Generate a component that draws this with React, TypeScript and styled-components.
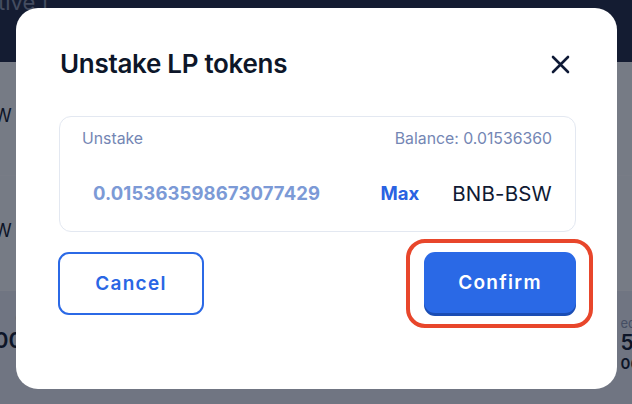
import React from "react";
import styled, { createGlobalStyle } from "styled-components";

const Global = createGlobalStyle`
  html, body { margin: 0; padding: 0; }
  body {
    width: 632px;
    height: 404px;
    overflow: hidden;
    font-family: Inter, "Noto Sans", "Liberation Sans", sans-serif;
    background: #ffffff;
  }
  * { box-sizing: border-box; }
`;

const Page = styled.div`
  width: 632px;
  height: 404px;
  display: flex;
  flex-direction: column;
  overflow: hidden;
  background: #f6f7fa;
`;

const Header = styled.header`
  height: 62px;
  flex: none;
  background: #1d2640;
  color: #8a93a8;
  font-size: 22px;
  line-height: 22px;
  overflow: hidden;
`;

const HeaderText = styled.div`
  margin-top: -9px;
  margin-left: -2px;
`;

const Row = styled.div<{ $h: number; $shade?: boolean }>`
  height: ${(p) => p.$h}px;
  flex: none;
  display: flex;
  justify-content: space-between;
  align-items: flex-start;
  background: ${(p) => (p.$shade ? "#eceff5" : "#fbfcfd")};
  border-top: 1px solid #ffffff;
  color: #0d1629;
`;

const EdgeText = styled.div<{ $top: number; $size?: number; $weight?: number; $lh?: number }>`
  margin-top: ${(p) => p.$top}px;
  font-size: ${(p) => p.$size ?? 18}px;
  font-weight: ${(p) => p.$weight ?? 400};
  line-height: ${(p) => p.$lh ?? 22}px;
`;

const EdgeCol = styled.div<{ $right?: boolean }>`
  display: flex;
  flex-direction: column;
  align-items: ${(p) => (p.$right ? "flex-start" : "flex-end")};
  margin-left: ${(p) => (p.$right ? "0" : "-6px")};
  margin-right: ${(p) => (p.$right ? "-8px" : "0")};
`;

const Small = styled.span`
  font-size: 13px;
  color: #8b96b0;
`;

const Overlay = styled.div`
  position: fixed;
  inset: 0;
  background: rgba(14, 21, 40, 0.56);
  display: flex;
  align-items: flex-start;
  justify-content: flex-start;
  padding: 8px 0 0 16px;
`;

const Modal = styled.div`
  width: 601px;
  height: 381px;
  background: #ffffff;
  border-radius: 22px;
  padding: 41px 41px 0 43px;
  display: flex;
  flex-direction: column;
`;

const TitleRow = styled.div`
  display: flex;
  align-items: center;
  justify-content: space-between;
  height: 30px;
`;

const Title = styled.h2`
  margin: 0;
  font-size: 26px;
  line-height: 30px;
  font-weight: 600;
  color: #0d1629;
  letter-spacing: -0.3px;
  padding-left: 1px;
`;

const CloseButton = styled.button`
  border: none;
  background: none;
  padding: 0;
  margin-right: 6px;
  width: 20px;
  height: 20px;
  display: flex;
  align-items: center;
  justify-content: center;
  cursor: pointer;
  color: #0f1a36;
`;

const InputBox = styled.div`
  margin-top: 37px;
  height: 116px;
  border: 1.5px solid #e3e8f1;
  border-radius: 12px;
  padding: 12px 23px 0 22px;
  display: flex;
  flex-direction: column;
`;

const LabelRow = styled.div`
  display: flex;
  justify-content: space-between;
  align-items: center;
  font-size: 15.8px;
  line-height: 20px;
  color: #7486b4;
`;

const ValueRow = styled.div`
  margin-top: 28px;
  display: flex;
  align-items: center;
  height: 32px;
`;

const Amount = styled.div`
  flex: 1;
  padding-left: 11px;
  font-size: 18.5px;
  font-weight: 700;
  color: #7c9ad6;
  letter-spacing: 0.1px;
`;

const MaxButton = styled.button`
  border: none;
  background: none;
  padding: 0;
  font-family: inherit;
  font-size: 18.5px;
  font-weight: 700;
  color: #2a62e2;
  margin-right: 33px;
  cursor: pointer;
`;

const Token = styled.div`
  font-size: 20.5px;
  color: #101a33;
  letter-spacing: 0.2px;
`;

const ButtonRow = styled.div`
  margin-top: 7px;
  display: flex;
  align-items: center;
  justify-content: space-between;
  margin-left: -1px;
  margin-right: -17px;
`;

const BaseButton = styled.button`
  font-family: inherit;
  font-size: 19px;
  font-weight: 600;
  letter-spacing: 1.3px;
  border-radius: 11px;
  cursor: pointer;
`;

const CancelButton = styled(BaseButton)`
  width: 146px;
  height: 63px;
  background: #ffffff;
  border: 2px solid #2b69e6;
  color: #2a66e4;
`;

const Highlight = styled.div`
  border: 4px solid #e8462b;
  border-radius: 19px;
  padding: 9px 13px 8px 14px;
  display: flex;
`;

const ConfirmButton = styled(BaseButton)`
  width: 152px;
  height: 61px;
  background: #2a69e6;
  border: none;
  color: #ffffff;
  box-shadow: 0 3px 0 #1b4db4;
  margin-bottom: 3px;
`;

const CloseIcon = () => (
  <svg width="19" height="19" viewBox="0 0 19 19" fill="none">
    <path d="M2 2L17 17M17 2L2 17" stroke="currentColor" strokeWidth="2.6" strokeLinecap="round" />
  </svg>
);

export default function App() {
  return (
    <>
      <Global />
      <Page>
        <Header>
          <HeaderText>tive f</HeaderText>
        </Header>
        <Row $h={113}>
          <EdgeCol>
            <EdgeText $top={42}>W</EdgeText>
          </EdgeCol>
          <EdgeCol $right />
        </Row>
        <Row $h={115}>
          <EdgeCol>
            <EdgeText $top={44}>W</EdgeText>
          </EdgeCol>
          <EdgeCol $right />
        </Row>
        <Row $h={114} $shade>
          <EdgeCol>
            <EdgeText $top={18} $size={13} $lh={16}>
              <Small>o</Small>
            </EdgeText>
            <EdgeText $top={2} $size={22} $weight={600} $lh={26}>00</EdgeText>
          </EdgeCol>
          <EdgeCol $right>
            <EdgeText $top={24} $size={13} $lh={16}>
              <Small>ed</Small>
            </EdgeText>
            <EdgeText $top={0} $size={21} $weight={600} $lh={24}>5</EdgeText>
            <EdgeText $top={0} $size={15} $weight={600} $lh={18}>06</EdgeText>
          </EdgeCol>
        </Row>
      </Page>
      <Overlay>
        <Modal>
          <TitleRow>
            <Title>Unstake LP tokens</Title>
            <CloseButton aria-label="Close">
              <CloseIcon />
            </CloseButton>
          </TitleRow>
          <InputBox>
            <LabelRow>
              <span>Unstake</span>
              <span>Balance: 0.01536360</span>
            </LabelRow>
            <ValueRow>
              <Amount>0.015363598673077429</Amount>
              <MaxButton>Max</MaxButton>
              <Token>BNB-BSW</Token>
            </ValueRow>
          </InputBox>
          <ButtonRow>
            <CancelButton>Cancel</CancelButton>
            <Highlight>
              <ConfirmButton>Confirm</ConfirmButton>
            </Highlight>
          </ButtonRow>
        </Modal>
      </Overlay>
    </>
  );
}
